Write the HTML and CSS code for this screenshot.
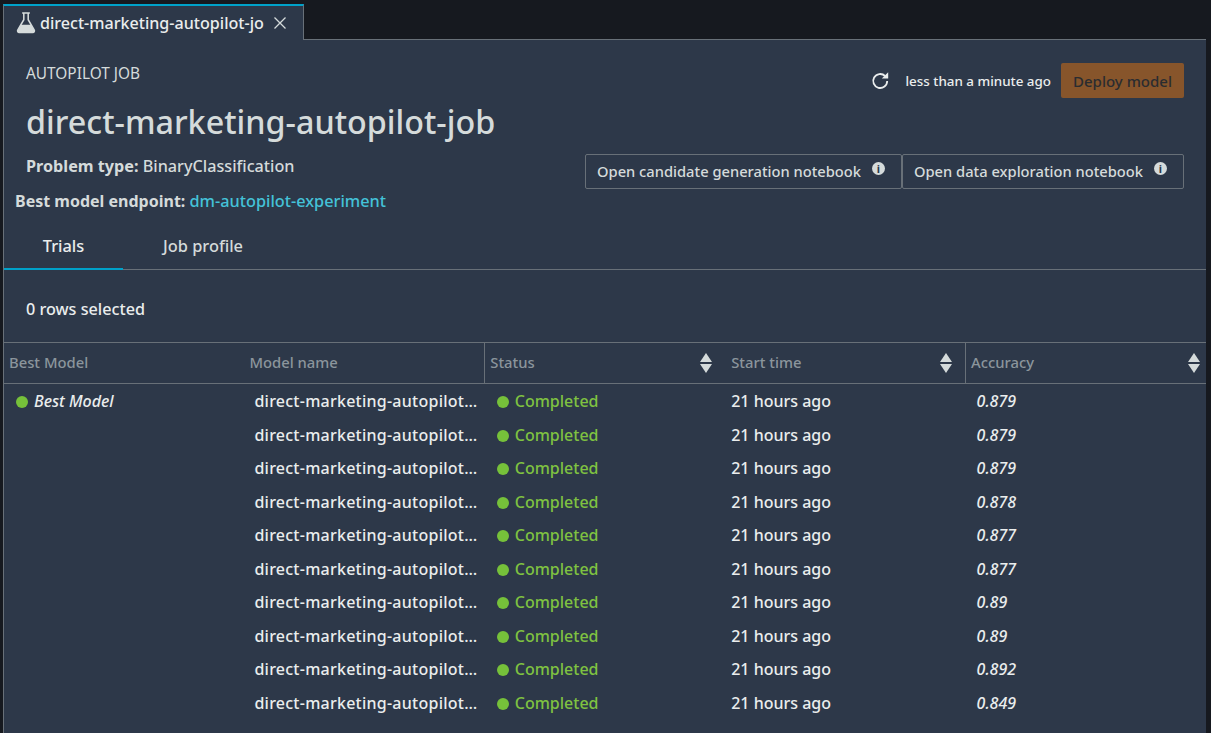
FILE: index.html
```html
<!DOCTYPE html>
<html lang="en">
<head>
    <meta charset="UTF-8" />
    <title>direct-marketing-autopilot-job</title>
    <link rel="stylesheet" href="styles.css">
</head>
<body>
    <!-- tab strip -->
    <div class="tab-strip">
        <div class="tab">
            <svg class="flask" viewBox="0 0 20 20" width="22" height="22">
                <path d="M6.5 1h7M8 1v6L2.6 16.3c-.7 1.2 0 2.4 1.3 2.4h12.2c1.3 0 2-1.2 1.3-2.4L12 7V1" fill="none" stroke="#d5dbdb" stroke-width="1.4"/>
                <path d="M5.5 11.5h9l3 5.2c.5 1-.1 2-1.2 2H3.7c-1.1 0-1.7-1-1.2-2z" fill="#d5dbdb"/>
            </svg>
            <span class="tab-title">direct-marketing-autopilot-jo</span>
            <svg class="close" viewBox="0 0 14 14" width="14" height="14">
                <path d="M1.5 1.5l11 11M12.5 1.5l-11 11" stroke="#d5dbdb" stroke-width="1.3" fill="none"/>
            </svg>
        </div>
    </div>

    <div class="panel">
        <!-- job header -->
        <header class="job-header">
            <div class="job-info">
                <div class="eyebrow">AUTOPILOT JOB</div>
                <h1>direct-marketing-autopilot-job</h1>
                <p class="problem"><b>Problem type:</b> BinaryClassification</p>
                <p class="endpoint"><b>Best model endpoint:</b> <a href="#">dm-autopilot-experiment</a></p>
            </div>
            <div class="job-actions">
                <div class="action-top">
                    <svg class="refresh" viewBox="0 0 20 20" width="20" height="20">
                        <path d="M16.2 10a7 7 0 1 1-2.1-5" fill="none" stroke="#eaeded" stroke-width="1.8"/>
                        <path d="M17.2 1.2v6.4h-6.4z" fill="#eaeded"/>
                    </svg>
                    <span class="updated">less than a minute ago</span>
                    <button class="btn-deploy">Deploy model</button>
                </div>
                <div class="action-notebooks">
                    <button class="btn-notebook">Open candidate generation notebook<span class="info">i</span></button>
                    <button class="btn-notebook">Open data exploration notebook<span class="info">i</span></button>
                </div>
            </div>
        </header>

        <!-- tabs -->
        <nav class="sub-tabs">
            <a class="sub-tab active">Trials</a>
            <a class="sub-tab">Job profile</a>
        </nav>

        <div class="selected-count">0 rows selected</div>

        <!-- trials -->
        <table class="trials">
            <thead>
                <tr>
                    <th class="col-best">Best Model</th>
                    <th class="col-name">Model name</th>
                    <th class="sortable divider">Status<span class="sort"></span></th>
                    <th class="sortable col-time">Start time<span class="sort"></span></th>
                    <th class="sortable divider">Accuracy<span class="sort last"></span></th>
                </tr>
            </thead>
            <tbody id="trialRows"></tbody>
        </table>
    </div>

    <script>
        const accuracy = ['0.879', '0.879', '0.879', '0.878', '0.877', '0.877', '0.89', '0.89', '0.892', '0.849'];
        const tbody = document.getElementById('trialRows');

        accuracy.forEach((val, i) => {
            const tr = document.createElement('tr');
            const best = i === 0 ? '<span class="dot"></span><em>Best Model</em>' : '';
            tr.innerHTML = `
                <td class="cell-best">${best}</td>
                <td class="cell-name">direct-marketing-autopilot…</td>
                <td class="cell-status"><span class="dot"></span>Completed</td>
                <td class="cell-time">21 hours ago</td>
                <td class="cell-acc">${val}</td>`;
            tbody.appendChild(tr);
        });
    </script>
</body>
</html>
```

FILE: styles.css
```css
:root {
    --bg-dark: #16191f;
    --bg-panel: #2d3849;
    --line: #687078;
    --text: #d5dbdb;
    --text-strong: #eaeded;
    --muted: #8b959c;
    --blue: #00a1c9;
    --link: #44c2d8;
}

* {
    box-sizing: border-box;
}

html, body {
    height: 100%;
}

body {
    margin: 0;
    padding: 4px 5px 0 3px;
    overflow: hidden;
    background: var(--bg-dark);
    color: var(--text);
    font-family: "Noto Sans", Arial, sans-serif;
    font-size: 16px;
    font-weight: 500;
}

/* ====== Tab strip ====== */
.tab-strip {
    display: flex;
    height: 35px;
}

.tab {
    display: flex;
    align-items: center;
    width: 301px;
    height: 36px;
    padding-left: 11px;
    background: var(--bg-panel);
    border-top: 2px solid var(--blue);
    border-right: 1px solid var(--line);
    border-left: 1px solid var(--line);
    position: relative;
    z-index: 1;
}

.tab-title {
    margin-left: 3px;
    color: var(--text-strong);
    font-size: 16.1px;
    white-space: nowrap;
}

.close {
    margin-left: 9px;
}

/* ====== Panel ====== */
.panel {
    height: 700px;
    background: var(--bg-panel);
    border-top: 1px solid var(--line);
    border-left: 1px solid var(--line);
}

.job-header {
    display: flex;
    justify-content: space-between;
    height: 189px;
    padding-right: 22px;
}

.job-info {
    padding-top: 25px;
}

.eyebrow {
    margin-left: 22px;
    font-size: 15.4px;
    font-weight: 400;
    line-height: 18px;
}

h1 {
    margin: 16px 0 0 22px;
    color: var(--text);
    font-size: 32.3px;
    font-weight: 500;
    line-height: 44px;
}

.problem, .endpoint {
    margin: 0;
    font-size: 16.2px;
    line-height: 20px;
}

.problem {
    margin: 13px 0 0 22px;
}

.endpoint {
    margin: 15px 0 0 11px;
    font-size: 16px;
}

.endpoint a {
    color: var(--link);
    font-size: 16.3px;
    text-decoration: none;
}

.job-actions {
    display: flex;
    flex-direction: column;
    align-items: flex-end;
    padding-top: 23px;
}

.action-top {
    display: flex;
    align-items: center;
}

.updated {
    margin: 0 10px 0 14px;
    color: var(--text-strong);
    font-size: 13.4px;
}

.btn-deploy {
    width: 123px;
    height: 35px;
    background: #87552b;
    border: none;
    border-radius: 2px;
    color: #2a2c30;
    font: inherit;
    font-size: 15px;
}

.action-notebooks {
    display: flex;
    margin-top: 56px;
}

.btn-notebook {
    display: flex;
    height: 35px;
    padding: 6px 16px 0 11px;
    background: transparent;
    border: 1px solid var(--line);
    border-radius: 2px;
    color: var(--text);
    font: inherit;
    font-size: 14.7px;
    white-space: nowrap;
}

.info {
    width: 13px;
    height: 13px;
    margin: 1px 0 0 11px;
    border-radius: 50%;
    background: var(--text);
    color: var(--bg-panel);
    font-size: 11px;
    font-weight: 700;
    line-height: 13px;
    text-align: center;
}

/* ====== Sub tabs ====== */
.sub-tabs {
    display: flex;
    height: 41px;
    border-bottom: 1px solid var(--line);
}

.sub-tab {
    width: 119px;
    padding-top: 5px;
    color: var(--text);
    font-size: 16.4px;
    text-align: center;
}

.sub-tab.active {
    color: var(--text-strong);
    border-bottom: 2px solid var(--blue);
    height: 41px;
}

.sub-tab + .sub-tab {
    width: 160px;
}

.selected-count {
    height: 72px;
    padding: 28px 0 0 22px;
    color: var(--text-strong);
    font-size: 16.2px;
}

/* ====== Table ====== */
.trials {
    width: 100%;
    border-collapse: collapse;
    table-layout: fixed;
}

.trials th {
    position: relative;
    height: 41px;
    padding: 0 0 2px 5px;
    border-top: 1px solid var(--line);
    border-bottom: 1px solid var(--line);
    color: var(--muted);
    font-size: 14.8px;
    font-weight: 500;
    text-align: left;
}

.trials th.divider {
    border-left: 1px solid var(--line);
}

.trials th.col-time {
    padding-left: 6px;
}

.sort {
    position: absolute;
    top: 10px;
    right: 12px;
    width: 13px;
    height: 20px;
}

.sort.last {
    right: 5px;
}

.sort::before, .sort::after {
    content: "";
    position: absolute;
    left: 0;
    border-left: 6.5px solid transparent;
    border-right: 6.5px solid transparent;
}

.sort::before {
    top: 0;
    border-bottom: 9px solid var(--text);
}

.sort::after {
    bottom: 0;
    border-top: 9px solid var(--text);
}

.trials td {
    height: 33.5px;
    padding: 0;
    color: var(--text-strong);
    font-size: 16px;
    white-space: nowrap;
}

.trials tbody tr:first-child td {
    height: 34.5px;
}

.cell-best {
    padding-left: 12px !important;
}

.cell-best em {
    font-style: italic;
}

.trials .cell-name {
    padding-left: 10px !important;
    letter-spacing: 0.25px;
}

.cell-status {
    padding-left: 12px !important;
    color: #7fc241 !important;
}

.cell-time {
    padding-left: 6px !important;
}

.cell-acc {
    padding-left: 11px !important;
    font-style: italic;
}

.dot {
    display: inline-block;
    width: 12px;
    height: 12px;
    margin-right: 6px;
    border-radius: 50%;
    background: #76c13a;
    vertical-align: -1px;
}
```
